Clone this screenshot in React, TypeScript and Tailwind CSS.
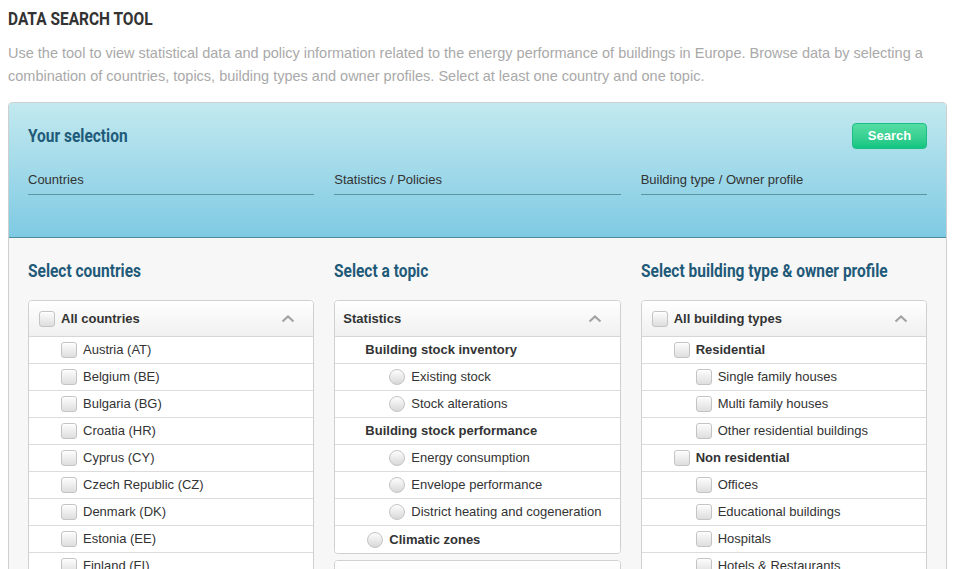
import React from "react";

const cond = "font-['Roboto',sans-serif] inline-block origin-left scale-x-[0.86] whitespace-nowrap";

type Item = { label: string; level: 0 | 1 | 2; bold?: boolean; kind: "check" | "radio" | "none" };

const countries = [
  "Austria (AT)",
  "Belgium (BE)",
  "Bulgaria (BG)",
  "Croatia (HR)",
  "Cyprus (CY)",
  "Czech Republic (CZ)",
  "Denmark (DK)",
  "Estonia (EE)",
  "Finland (FI)",
  "France (FR)",
];

const topics: Item[] = [
  { label: "Building stock inventory", level: 1, bold: true, kind: "none" },
  { label: "Existing stock", level: 2, kind: "radio" },
  { label: "Stock alterations", level: 2, kind: "radio" },
  { label: "Building stock performance", level: 1, bold: true, kind: "none" },
  { label: "Energy consumption", level: 2, kind: "radio" },
  { label: "Envelope performance", level: 2, kind: "radio" },
  { label: "District heating and cogeneration", level: 2, kind: "radio" },
  { label: "Climatic zones", level: 0, bold: true, kind: "radio" },
];

const buildings: Item[] = [
  { label: "Residential", level: 1, bold: true, kind: "check" },
  { label: "Single family houses", level: 2, kind: "check" },
  { label: "Multi family houses", level: 2, kind: "check" },
  { label: "Other residential buildings", level: 2, kind: "check" },
  { label: "Non residential", level: 1, bold: true, kind: "check" },
  { label: "Offices", level: 2, kind: "check" },
  { label: "Educational buildings", level: 2, kind: "check" },
  { label: "Hospitals", level: 2, kind: "check" },
  { label: "Hotels & Restaurants", level: 2, kind: "check" },
];

function Check() {
  return (
    <span className="inline-block h-4 w-4 shrink-0 rounded-[3px] border border-[#c4c4c4] bg-gradient-to-b from-[#fdfdfd] to-[#dedede] shadow-[inset_0_1px_0_#fff]" />
  );
}

function Radio() {
  return (
    <span className="inline-block h-4 w-4 shrink-0 rounded-full border border-[#c4c4c4] bg-gradient-to-b from-[#fdfdfd] to-[#d8d8d8]" />
  );
}

function Chevron() {
  return (
    <svg width="14" height="9" viewBox="0 0 14 9" className="mr-[8px]">
      <polyline points="1.5,7.5 7,2.5 12.5,7.5" fill="none" stroke="#a3a3a3" strokeWidth="2.2" />
    </svg>
  );
}

function ListHeader({ label, check }: { label: string; check?: boolean }) {
  return (
    <div className="flex h-[36px] items-center gap-[6px] border-b border-[#d6d6d6] bg-gradient-to-b from-white to-[#f0f0f0] pl-[10px] pr-[10px]">
      {check && <Check />}
      <span className={`flex-1 text-[13px] font-bold text-[#333] ${check ? "" : "-ml-[2px]"}`}>{label}</span>
      <Chevron />
    </div>
  );
}

function Row({ item }: { item: Item }) {
  const pad = item.kind === "none" ? "pl-[30px]" : item.level === 2 ? "pl-[54px]" : "pl-[32px]";
  return (
    <div className={`flex h-[27px] items-center gap-[5px] border-b border-[#dcdcdc] bg-white ${pad}`}>
      {item.kind === "check" && <Check />}
      {item.kind === "radio" && <Radio />}
      <span className={`text-[13px] text-[#333] ${item.bold ? "font-bold" : ""} ${item.kind !== "none" ? "ml-[1px]" : ""}`}>
        {item.label}
      </span>
    </div>
  );
}

function Heading({ children }: { children: React.ReactNode }) {
  return (
    <h2 className="mb-[18px] h-[22px] text-[18px] font-bold leading-[22px] text-[#1f5a79]">
      <span className={cond}>{children}</span>
    </h2>
  );
}

export default function App() {
  return (
    <div className="h-[569px] overflow-hidden bg-white font-['Liberation_Sans',Arial,sans-serif]">
      <div className="pl-[8px] pr-[9px] pt-[9px]">
        <h1 className="h-[20px] text-[18px] font-bold leading-[20px] text-[#333]">
          <span className={cond}>DATA SEARCH TOOL</span>
        </h1>
        <p className="mt-[13px] pr-[17px] text-[14.5px] leading-[23px] text-[#a9a9a9]">
          Use the tool to view statistical data and policy information related to the energy performance of buildings in
          Europe. Browse data by selecting a combination of countries, topics, building types and owner profiles. Select at
          least one country and one topic.
        </p>

        <div className="mt-[14px] overflow-hidden rounded-t-[4px] border border-[#cfcfcf]">
          <div className="h-[135px] border-b border-[#4c8c9c] bg-gradient-to-b from-[#c2e9ef] to-[#7ecae3] px-[19px] pt-[20px]">
            <div className="flex h-[26px] items-center justify-between">
              <span className="text-[18px] font-bold text-[#1f5a79]">
                <span className={cond}>Your selection</span>
              </span>
              <button
                type="button"
                className="h-[26px] w-[75px] rounded-[4px] border border-[#1cbf82] bg-gradient-to-b from-[#55dda4] to-[#0ec582] text-[13px] font-bold text-white"
              >
                Search
              </button>
            </div>
            <div className="mt-[23px] grid grid-cols-3 gap-[20px]">
              {["Countries", "Statistics / Policies", "Building type / Owner profile"].map((l) => (
                <div key={l} className="border-b border-[#5b97a3] pb-[6px] text-[13px] leading-[16px] text-[#333]">
                  {l}
                </div>
              ))}
            </div>
          </div>

          <div className="bg-[#f7f7f7] px-[19px] pt-[22px] pb-[40px]">
            <div className="grid grid-cols-3 gap-[20px]">
              <div>
                <Heading>Select countries</Heading>
                <div className="overflow-hidden rounded-t-[4px] border border-[#d0d0d0]">
                  <ListHeader label="All countries" check />
                  {countries.map((c) => (
                    <Row key={c} item={{ label: c, level: 1, kind: "check" }} />
                  ))}
                </div>
              </div>
              <div>
                <Heading>Select a topic</Heading>
                <div className="overflow-hidden rounded-[4px] border border-[#d0d0d0]">
                  <ListHeader label="Statistics" />
                  {topics.map((t, i) => (
                    <div key={t.label} className={i === topics.length - 1 ? "[&>div]:border-b-0" : ""}>
                      <Row item={t} />
                    </div>
                  ))}
                </div>
                <div className="mt-[6px] overflow-hidden rounded-t-[4px] border border-[#d0d0d0]">
                  <ListHeader label="Policies" />
                </div>
              </div>
              <div>
                <Heading>Select building type &amp; owner profile</Heading>
                <div className="overflow-hidden rounded-t-[4px] border border-[#d0d0d0]">
                  <ListHeader label="All building types" check />
                  {buildings.map((b) => (
                    <Row key={b.label} item={b} />
                  ))}
                </div>
              </div>
            </div>
          </div>
        </div>
      </div>
    </div>
  );
}
